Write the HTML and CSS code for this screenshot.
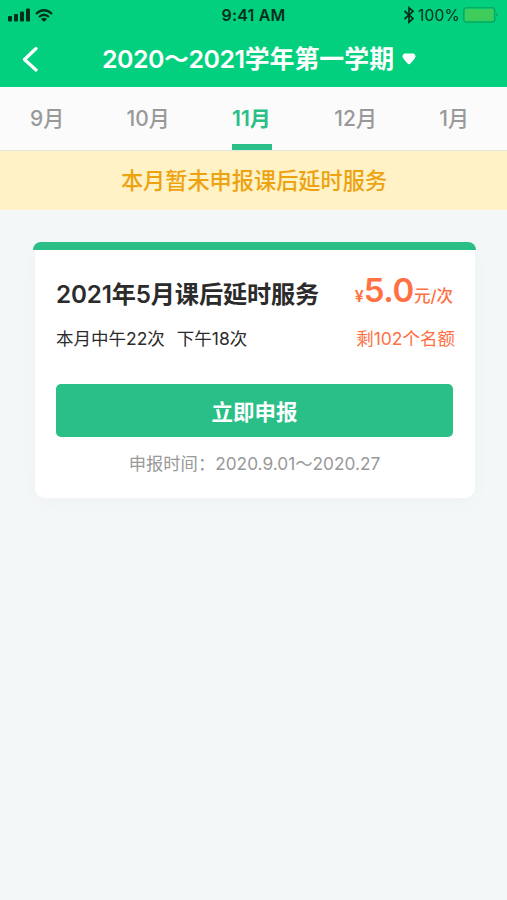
FILE: index.html
```html
<!DOCTYPE html>
<html lang="zh-CN">
<head>
  <meta charset="UTF-8">
  <meta name="viewport" content="width=device-width, initial-scale=1.0">
  <title>课后延时服务</title>
  <link rel="stylesheet" href="styles.css">
</head>
<body>
  <header class="header">
    <div class="status-bar">
      <div class="status-left">
        <svg width="23" height="14" viewBox="0 0 23 14" fill="#03301c">
          <rect x="0" y="8" width="4" height="5.500" rx="1"/>
          <rect x="6" y="6" width="4" height="7.500" rx="1"/>
          <rect x="12" y="3.500" width="4" height="10" rx="1"/>
          <rect x="18" y="0.500" width="4" height="13" rx="1"/>
        </svg>
        <svg width="18" height="13" viewBox="0 0 18 13" fill="none" stroke="#03301c" stroke-width="2.200">
          <path d="M1 5 Q9 -2.500 17 5"/>
          <path d="M4 8 Q9 3.500 14 8"/>
          <path d="M6 10 Q9 7.400 12 10 L9 12.900Z" fill="#03301c" stroke="none"/>
        </svg>
      </div>
      <span class="status-time">9:41 AM</span>
      <div class="status-right">
        <svg width="12" height="18" viewBox="0 0 12 18" fill="none" stroke="#03301c" stroke-width="1.700">
          <path d="M1.500 5 L10 12.500 L6 16.200 V1.800 L10 5.300 L1.500 13"/>
        </svg>
        <span class="status-percent">100%</span>
        <svg width="36" height="16" viewBox="0 0 36 16">
          <rect x="0.750" y="0.750" width="31" height="14.300" rx="2.500" fill="none" stroke="#0aa259" stroke-width="1.200"/>
          <rect x="2" y="2" width="28.500" height="11.800" rx="1" fill="#3fcc5b"/>
          <path d="M33.500 5.500 Q36 7.700 33.500 10Z" fill="#0a9a56"/>
        </svg>
      </div>
    </div>
    <div class="nav-bar">
      <svg class="back" width="16" height="26" viewBox="0 0 16 26" fill="none" stroke="#fff" stroke-width="3.200" stroke-linecap="round" stroke-linejoin="round">
        <path d="M14 2.500 L2.500 13.500 L14 24"/>
      </svg>
      <h1 class="title"><span class="title-years">2020～2021</span>学年第一学期</h1>
      <svg class="caret" width="14" height="12" viewBox="0 0 14 12" fill="#fff">
        <path d="M2.500 0.500 H11.500 Q13.700 1.300 13.500 3.500 Q13 5.500 8.700 10.300 Q7 12 5.300 10.300 Q1 5.500 0.500 3.500 Q0.300 1.300 2.500 0.500Z"/>
      </svg>
    </div>
  </header>

  <nav class="tabs">
    <span class="tab">9月</span>
    <span class="tab">10月</span>
    <span class="tab active">11月</span>
    <span class="tab">12月</span>
    <span class="tab">1月</span>
  </nav>

  <div class="notice">本月暂未申报课后延时服务</div>

  <main class="content">
    <div class="card-top"></div>
    <section class="card">
      <div class="row row-title">
        <h2 class="card-title">2021年5月课后延时服务</h2>
        <div class="price"><span class="currency">¥</span><span class="amount">5.0</span><span class="unit">元/次</span></div>
      </div>
      <div class="row row-info">
        <div class="sessions"><span>本月中午22次</span><span>下午18次</span></div>
        <span class="quota">剩102个名额</span>
      </div>
      <button class="apply" type="button">立即申报</button>
      <p class="period"><span>申报时间：</span><span class="dates">2020.9.01～2020.27</span></p>
    </section>
  </main>
</body>
</html>
```
FILE: styles.css
```css
* {
  box-sizing: border-box;
}

body {
  margin: 0;
  min-height: 100vh;
  background: #f3f7f8;
  color: #2b2b2b;
  font-family: Inter, "Noto Sans CJK SC", sans-serif;
}

h1, h2, p {
  margin: 0;
}

svg {
  display: block;
  flex-shrink: 0;
}

/* Header */
.header {
  height: 87px;
  background: #03d07e;
}

.status-bar {
  display: grid;
  grid-template-columns: 1fr auto 1fr;
  align-items: center;
  height: 30px;
  padding: 0 8px;
  color: #03301c;
  font-size: 15.5px;
}

.status-left,
.status-right {
  display: flex;
  align-items: center;
  gap: 4px;
}

.status-right {
  justify-content: flex-end;
}

.status-time {
  font-weight: 600;
  font-size: 16px;
  letter-spacing: 0.2px;
}

.status-percent {
  margin: 0 -1px 0 -1px;
  letter-spacing: 0.2px;
}

.nav-bar {
  display: flex;
  align-items: center;
  height: 58px;
  padding: 0 0 0 22px;
}

.title {
  margin-left: 64px;
  color: #fff;
  font-size: 24.9px;
  font-weight: 700;
  line-height: 36px;
  white-space: nowrap;
}

.title-years {
  font-weight: 600;
  letter-spacing: -0.45px;
}

.caret {
  margin-left: 8px;
}

/* Month tabs */
.tabs {
  display: flex;
  justify-content: space-between;
  height: 64px;
  padding: 0 38px 0 30px;
  background: #fbfbfb;
  border-bottom: 1px solid #e4e4e0;
}

.tab {
  height: 63px;
  line-height: 64px;
  color: #999;
  font-size: 21px;
  font-weight: 500;
}

.tab.active {
  min-width: 40px;
  color: #29bf87;
  font-weight: 600;
  border-bottom: 6px solid #29bf87;
}

.notice {
  height: 59px;
  padding-left: 1px;
  background: #fff2c6;
  color: #eda20f;
  font-size: 22.2px;
  font-weight: 500;
  line-height: 60px;
  text-align: center;
}

/* Service card */
.content {
  padding: 32px 31px 0 33px;
}

.card-top {
  height: 8px;
  background: #29bf87;
  border-radius: 8px 8px 0 0;
}

.card {
  height: 248px;
  margin: 0 1px 0 2px;
  padding: 22px 22px 0 21px;
  background: #fff;
  border-radius: 0 0 10px 10px;
  box-shadow: 0 4px 20px rgba(0, 0, 0, 0.025);
}

.row {
  display: flex;
  justify-content: space-between;
  white-space: nowrap;
}

.row-title {
  height: 40px;
  align-items: center;
}

.card-title {
  font-size: 24.2px;
  font-weight: 600;
  letter-spacing: -0.15px;
}

.price {
  padding-top: 2px;
  color: #ff7042;
  font-weight: 600;
  line-height: 40px;
}

.currency,
.unit {
  font-size: 16px;
}

.unit {
  font-size: 16.5px;
  font-weight: 500;
}

.amount {
  font-size: 33px;
  letter-spacing: -0.4px;
}

.row-info {
  height: 24px;
  margin-top: 14px;
  line-height: 26px;
  font-size: 17.5px;
}

.sessions {
  display: flex;
  gap: 12px;
}

.quota {
  margin-right: -2px;
  color: #ff7042;
}

.apply {
  display: block;
  width: 100%;
  height: 53px;
  margin-top: 34px;
  padding: 0;
  border: none;
  border-radius: 5px;
  background: #29bf87;
  color: #fff;
  font-family: inherit;
  font-size: 21.5px;
  font-weight: 700;
}

.period {
  margin-top: 14px;
  color: #999;
  font-size: 17.3px;
  line-height: 26px;
  text-align: center;
}
```
